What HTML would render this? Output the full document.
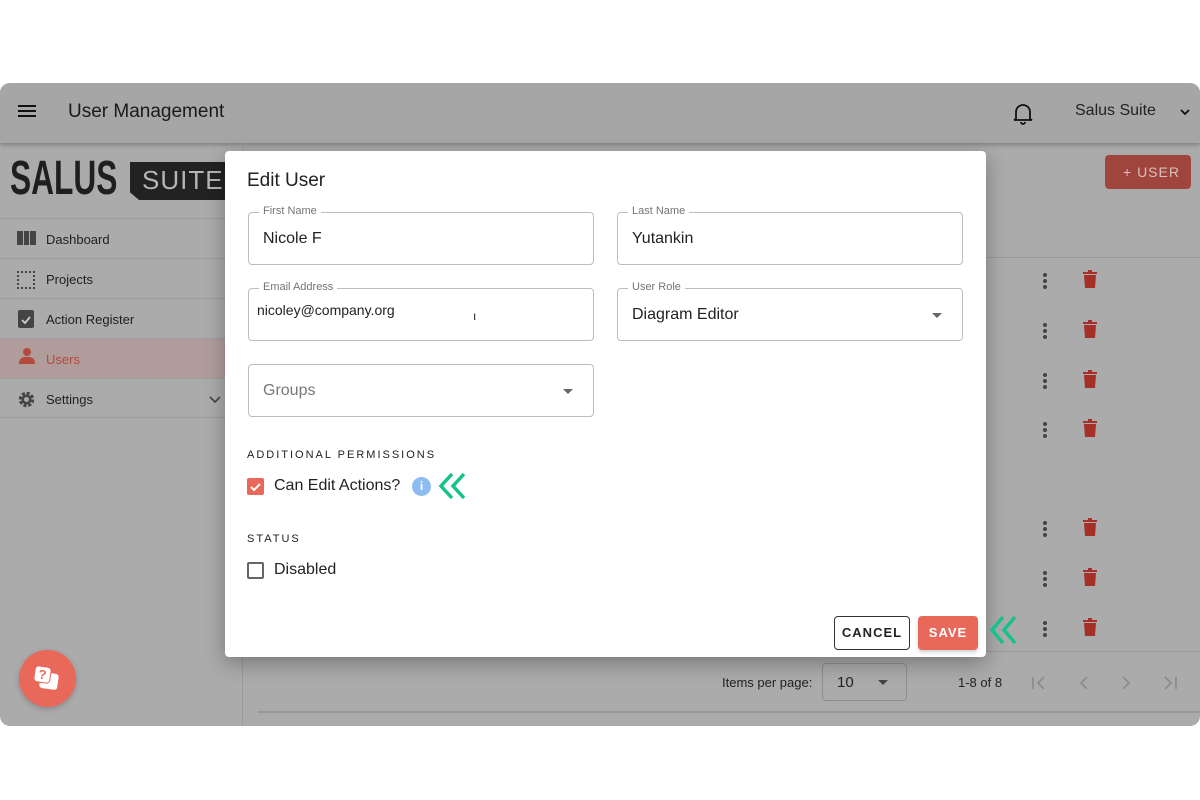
<!DOCTYPE html>
<html><head><meta charset="utf-8"><style>
*{box-sizing:border-box;margin:0;padding:0}
body{width:1200px;height:800px;background:#fff;font-family:"Liberation Sans",sans-serif;position:relative;overflow:hidden}
.app{position:absolute;left:0;top:83px;width:1200px;height:643px;background:#ababab;border-radius:10px;overflow:hidden}
.hdr{position:absolute;left:0;top:0;width:1200px;height:60px;background:#a6a6a6;box-shadow:0 2px 4px rgba(0,0,0,.25)}
.side{position:absolute;left:0;top:60px;width:243px;height:583px;border-right:1px solid #9a9a9a}
.mi{position:absolute;left:0;width:243px;height:40px;border-top:1px solid #9c9c9c;font-size:13px;color:#1f1f1f;padding:13px 0 0 46px}
.dlg{position:absolute;left:225px;top:151px;width:761px;height:506px;background:#fff;border-radius:4px;box-shadow:0 6px 20px rgba(0,0,0,.3)}
.fld{position:absolute;border:1px solid #bdbdbd;border-radius:4px;height:53px}
.fld .lb{position:absolute;top:-8px;left:10px;background:#fff;padding:0 4px;font-size:11px;color:#757575}
.fld .v{position:absolute;left:14px;top:17px;font-size:16px;color:#222}
.caret{position:absolute;right:20px;top:24px;border-left:5px solid transparent;border-right:5px solid transparent;border-top:5px solid #666}
.sec{position:absolute;left:22px;font-size:11px;letter-spacing:2px;color:#222}
.dots{position:absolute;width:4px;left:1043px}
.dots i{display:block;width:4px;height:4px;border-radius:2px;background:#444;margin-bottom:2px}
.trash{position:absolute;left:1083px}
</style></head><body>
<div class="app">
 <div class="hdr">
  <div style="position:absolute;left:18px;top:22px;width:18px;height:2px;background:#111;box-shadow:0 5px 0 #111,0 10px 0 #111"></div>
  <div style="position:absolute;left:68px;top:18px;font-size:19px;color:#1a1a1a">User Management</div>
  <svg style="position:absolute;left:1012px;top:18px" width="22" height="24" viewBox="0 0 22 24"><path d="M4 18V11a7 7 0 0 1 14 0v7l2 1H2z M9 21a2 2 0 0 0 4 0" fill="none" stroke="#111" stroke-width="1.8"/></svg>
  <div style="position:absolute;left:1075px;top:19px;font-size:16px;color:#222">Salus Suite</div>
  <svg style="position:absolute;left:1179px;top:24px" width="12" height="10"><path d="M2 3l4 4 4-4" fill="none" stroke="#111" stroke-width="1.8"/></svg>
 </div>
 <div class="side">
  <div style="position:absolute;left:10px;top:14px;font-size:48px;font-weight:bold;color:#1f1f1f;line-height:44px;transform:scaleX(.66);transform-origin:left">SALUS</div>
  <div style="position:absolute;left:130px;top:19px;width:113px;height:38px;background:#222;clip-path:polygon(0 0,100% 0,100% 100%,8% 100%,0 80%)"></div>
  <div style="position:absolute;left:142px;top:22px;font-size:26px;color:#b5b5b5;letter-spacing:1px">SUITE</div>
  <div class="mi" style="top:75px">Dashboard</div>
  <div class="mi" style="top:115px">Projects</div>
  <div class="mi" style="top:155px">Action Register</div>
  <div class="mi" style="top:195px;background:#b09d9b;color:#b34a3e">Users</div>
  <div class="mi" style="top:235px;border-bottom:1px solid #9c9c9c">Settings</div>
  <div style="position:absolute;left:17px;top:88px;width:19px;height:14px;background:linear-gradient(90deg,#444 0 6px,transparent 6px 7px,#444 7px 12px,transparent 12px 13px,#444 13px)"></div>
  <div style="position:absolute;left:17px;top:128px;width:18px;height:18px;border:2px dotted #444"></div>
  <div style="position:absolute;left:18px;top:167px;width:16px;height:18px;background:#444;border-radius:2px"><svg width="16" height="18"><path d="M4 10l3 3 5-6" fill="none" stroke="#ccc" stroke-width="1.8"/></svg></div>
  <div style="position:absolute;left:23px;top:205px;width:8px;height:8px;border-radius:50%;background:#b34a3e"></div>
  <div style="position:absolute;left:19px;top:214px;width:16px;height:7px;border-radius:6px 6px 0 0;background:#b34a3e"></div>
  <svg style="position:absolute;left:17px;top:247px" width="19" height="19" viewBox="0 0 19 19"><circle cx="9.5" cy="9.5" r="6" fill="none" stroke="#444" stroke-width="3.5" stroke-dasharray="3 1.7"/><circle cx="9.5" cy="9.5" r="5" fill="#444"/><circle cx="9.5" cy="9.5" r="2.5" fill="#ababab"/></svg>
  <svg style="position:absolute;left:209px;top:253px" width="12" height="8"><path d="M1 1l5 5 5-5" fill="none" stroke="#444" stroke-width="1.6"/></svg>
 </div>
 <div style="position:absolute;left:1105px;top:72px;width:86px;height:34px;background:#a0453d;border-radius:4px;color:#d8c0bc;font-size:14px;letter-spacing:1px;padding:9px 0 0 18px">+ USER</div>
 <div style="position:absolute;left:258px;top:174px;width:942px;height:1px;background:#9a9a9a"></div>
 <div class="dots" style="top:190px"><i></i><i></i><i></i></div>
 <div class="dots" style="top:240px"><i></i><i></i><i></i></div>
 <div class="dots" style="top:290px"><i></i><i></i><i></i></div>
 <div class="dots" style="top:339px"><i></i><i></i><i></i></div>
 <div class="dots" style="top:438px"><i></i><i></i><i></i></div>
 <div class="dots" style="top:488px"><i></i><i></i><i></i></div>
 <div class="dots" style="top:538px"><i></i><i></i><i></i></div>
 <svg class="trash" style="top:187px" width="14" height="18"><path d="M0 2h14v2H0zM5 0h4v2H5zM1 5h12l-1 13H2z" fill="#a5302a"/></svg>
 <svg class="trash" style="top:237px" width="14" height="18"><path d="M0 2h14v2H0zM5 0h4v2H5zM1 5h12l-1 13H2z" fill="#a5302a"/></svg>
 <svg class="trash" style="top:287px" width="14" height="18"><path d="M0 2h14v2H0zM5 0h4v2H5zM1 5h12l-1 13H2z" fill="#a5302a"/></svg>
 <svg class="trash" style="top:336px" width="14" height="18"><path d="M0 2h14v2H0zM5 0h4v2H5zM1 5h12l-1 13H2z" fill="#a5302a"/></svg>
 <svg class="trash" style="top:435px" width="14" height="18"><path d="M0 2h14v2H0zM5 0h4v2H5zM1 5h12l-1 13H2z" fill="#a5302a"/></svg>
 <svg class="trash" style="top:485px" width="14" height="18"><path d="M0 2h14v2H0zM5 0h4v2H5zM1 5h12l-1 13H2z" fill="#a5302a"/></svg>
 <svg class="trash" style="top:535px" width="14" height="18"><path d="M0 2h14v2H0zM5 0h4v2H5zM1 5h12l-1 13H2z" fill="#a5302a"/></svg>
 <div style="position:absolute;left:258px;top:568px;width:942px;height:1px;background:#9a9a9a"></div>
 <div style="position:absolute;left:722px;top:592px;font-size:13px;color:#222">Items per page:</div>
 <div style="position:absolute;left:822px;top:580px;width:85px;height:38px;border:1px solid #8e8e8e;border-radius:4px"><span style="position:absolute;left:14px;top:10px;font-size:15px;color:#222">10</span><div class="caret" style="top:16px;right:18px;border-top-color:#444"></div></div>
 <div style="position:absolute;left:958px;top:592px;font-size:13px;color:#222">1-8 of 8</div>
 <svg style="position:absolute;left:1030px;top:590px" width="150" height="20"><g fill="none" stroke="#8a8a8a" stroke-width="1.6"><path d="M3 4v12M14 4l-6 6 6 6M57 4l-6 6 6 6M93 4l6 6-6 6M135 4l6 6-6 6M146 4v12"/></g></svg>
 <div style="position:absolute;left:258px;top:628px;width:942px;height:2px;background:#999"></div>
 <div style="position:absolute;left:19px;top:567px;width:57px;height:57px;border-radius:50%;background:#e8685a;box-shadow:0 2px 6px rgba(0,0,0,.2)"></div>
 <div style="position:absolute;left:40px;top:590px;width:18px;height:16px;background:#fff;border-radius:3px;transform:rotate(8deg)"></div>
 <div style="position:absolute;left:34px;top:583px;width:17px;height:17px;background:#fff;border:1.5px solid #e8685a;border-radius:4px;color:#e8685a;font-weight:bold;font-size:13px;text-align:center;line-height:15px;transform:rotate(8deg)">?</div>
</div>
<div class="dlg">
 <div style="position:absolute;left:22px;top:19px;font-size:19px;font-weight:500;color:#222">Edit User</div>
 <div class="fld" style="left:23px;top:61px;width:346px"><span class="lb">First Name</span><span class="v">Nicole F</span></div>
 <div class="fld" style="left:392px;top:61px;width:346px"><span class="lb">Last Name</span><span class="v">Yutankin</span></div>
 <div class="fld" style="left:23px;top:137px;width:346px"><span class="lb">Email Address</span><span class="v" style="left:8px;top:13px;font-size:14px">nicoley@company.org</span><span class="v" style="left:224px;top:20px;font-size:12px">ı</span></div>
 <div class="fld" style="left:392px;top:137px;width:346px"><span class="lb">User Role</span><span class="v">Diagram Editor</span><div class="caret"></div></div>
 <div class="fld" style="left:23px;top:213px;width:346px"><span class="v" style="color:#777">Groups</span><div class="caret"></div></div>
 <div class="sec" style="top:298px">ADDITIONAL PERMISSIONS</div>
 <div style="position:absolute;left:22px;top:327px;width:17px;height:17px;background:#e8685a;border-radius:2px"><svg width="17" height="17"><path d="M4 9l3 3 6-6" fill="none" stroke="#fff" stroke-width="2"/></svg></div>
 <div style="position:absolute;left:49px;top:326px;font-size:16px;color:#222">Can Edit Actions?</div>
 <div style="position:absolute;left:187px;top:326px;width:19px;height:19px;border-radius:50%;background:#8cbcf0;color:#fff;font-size:12px;font-weight:bold;text-align:center;line-height:19px">i</div>
 <svg style="position:absolute;left:212px;top:320px" width="32" height="30"><path d="M15 3L4 15l11 12M27 3L16 15l11 12" fill="none" stroke="#16c28c" stroke-width="3.5"/></svg>
 <div class="sec" style="top:382px">STATUS</div>
 <div style="position:absolute;left:22px;top:411px;width:17px;height:17px;border:2px solid #666;border-radius:2px"></div>
 <div style="position:absolute;left:49px;top:410px;font-size:16px;color:#222">Disabled</div>
 <div style="position:absolute;left:609px;top:465px;width:76px;height:34px;border:1px solid #333;border-radius:4px;font-size:13px;font-weight:bold;letter-spacing:1px;color:#222;text-align:center;line-height:32px">CANCEL</div>
 <div style="position:absolute;left:693px;top:465px;width:60px;height:34px;background:#e8685a;border-radius:4px;font-size:13px;font-weight:bold;letter-spacing:1px;color:#fff;text-align:center;line-height:34px;box-shadow:0 2px 3px rgba(0,0,0,.2)">SAVE</div>
</div>
<svg style="position:absolute;left:988px;top:614px" width="32" height="32"><path d="M15 3L4 16l11 13M27 3L16 16l11 13" fill="none" stroke="#16c28c" stroke-width="3.5"/></svg>
</body></html>
